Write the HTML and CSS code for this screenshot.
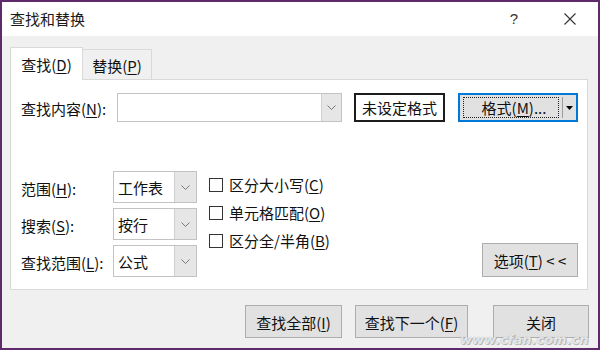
FILE: index.html
```html
<!DOCTYPE html>
<html lang="zh-CN">
<head>
<meta charset="utf-8">
<title>查找和替换</title>
<link rel="stylesheet" href="styles.css">
</head>
<body>
<div class="window">
  <div class="titlebar">
    <span class="title">查找和替换</span>
    <div class="tb-btns">
      <span class="tb-help">?</span>
      <span class="tb-close">
        <svg width="12" height="12" viewBox="0 0 12 12"><path d="M0.5 0.5 L11.5 11.5 M11.5 0.5 L0.5 11.5" stroke="#333" stroke-width="1.1" fill="none"/></svg>
      </span>
    </div>
  </div>
  <div class="body">
    <div class="tabs">
      <div class="tab active"><span>查找(<u>D</u>)</span></div>
      <div class="tab"><span>替换(<u>P</u>)</span></div>
    </div>
    <div class="panel">
      <div class="row1">
        <span class="lbl lbl-wide">查找内容(<u>N</u>):</span>
        <div class="combo combo-find">
          <span class="combo-text"></span>
          <span class="drop drop-narrow"><svg width="9" height="5" viewBox="0 0 9 5"><path d="M0.5 0.5 L4.5 4.5 L8.5 0.5" stroke="#777" fill="none"/></svg></span>
        </div>
        <div class="preview">未设定格式</div>
        <div class="fmt-btn">
          <div class="fmt-main"><span>格式(<u>M</u>)...</span></div>
          <div class="fmt-sep"></div>
          <div class="fmt-arrow"><svg width="7" height="4" viewBox="0 0 7 4"><path d="M0 0 L7 0 L3.5 4 Z" fill="#000"/></svg></div>
        </div>
      </div>
      <div class="lower">
        <div class="opts">
          <span class="lbl">范围(<u>H</u>):</span>
          <div class="combo sel"><span class="combo-text">工作表</span><span class="drop"><svg width="9" height="5" viewBox="0 0 9 5"><path d="M0.5 0.5 L4.5 4.5 L8.5 0.5" stroke="#777" fill="none"/></svg></span></div>
          <span class="lbl">搜索(<u>S</u>):</span>
          <div class="combo sel"><span class="combo-text">按行</span><span class="drop"><svg width="9" height="5" viewBox="0 0 9 5"><path d="M0.5 0.5 L4.5 4.5 L8.5 0.5" stroke="#777" fill="none"/></svg></span></div>
          <span class="lbl">查找范围(<u>L</u>):</span>
          <div class="combo sel"><span class="combo-text">公式</span><span class="drop"><svg width="9" height="5" viewBox="0 0 9 5"><path d="M0.5 0.5 L4.5 4.5 L8.5 0.5" stroke="#777" fill="none"/></svg></span></div>
        </div>
        <div class="checks">
          <label class="chk"><span class="box"></span><span>区分大小写(<u>C</u>)</span></label>
          <label class="chk"><span class="box"></span><span>单元格匹配(<u>O</u>)</span></label>
          <label class="chk"><span class="box"></span><span>区分全/半角(<u>B</u>)</span></label>
        </div>
        <div class="btn btn-opt"><span>选项(<u>T</u>) &lt; &lt;</span></div>
      </div>
    </div>
    <div class="footer">
      <div class="btn btn-all"><span>查找全部(<u>I</u>)</span></div>
      <div class="btn btn-next"><span>查找下一个(<u>F</u>)</span></div>
      <div class="btn btn-close"><span>关闭</span></div>
    </div>
  </div>
  <div class="watermark">www.cfan.com.cn</div>
</div>
</body>
</html>
```
FILE: styles.css
```css
* { box-sizing: border-box; }
html, body { margin: 0; padding: 0; }
body {
  width: 600px;
  height: 350px;
  font-family: "Noto Sans CJK SC", "Noto Sans", sans-serif;
  font-size: 15px;
  color: #111;
  background: #fff;
}
u { text-decoration: underline; text-underline-offset: 2px; text-decoration-thickness: 1px; }

.window {
  width: 600px;
  height: 350px;
  border: 2px solid #5e2a6c;
  display: flex;
  flex-direction: column;
  position: relative;
  overflow: hidden;
}

.titlebar {
  height: 34px;
  flex: none;
  background: #fff;
  display: flex;
  align-items: center;
  padding: 0 5px 0 8px;
  line-height: 20px;
}
.title { font-size: 15px; color: #1a1a1a; }
.tb-btns { margin-left: auto; display: flex; align-items: center; gap: 18px; }
.tb-help { width: 30px; text-align: center; font-family: "Liberation Sans", sans-serif; font-size: 15px; color: #333; }
.tb-close { width: 46px; display: flex; justify-content: center; align-items: center; height: 20px; }

.body {
  flex: 1;
  background: #f0f0f0;
  padding: 11px 10px 0 8px;
  display: flex;
  flex-direction: column;
}

.tabs { display: flex; height: 32px; align-items: flex-start; }
.tab {
  height: 30px;
  margin-top: 2px;
  width: 69px;
  border: 1px solid #d9d9d9;
  border-bottom: 0;
  border-left: 0;
  background: #f0f0f0;
  display: flex;
  align-items: center;
  justify-content: center;
  line-height: 20px;
  padding-top: 3px;
}
.tab.active {
  margin-top: 0;
  height: 33px;
  width: 73px;
  border-left: 1px solid #d9d9d9;
  background: #fff;
  position: relative;
  z-index: 1;
  padding-top: 2px;
}

.panel {
  height: 211px;
  background: #fff;
  border: 1px solid #d9d9d9;
  padding: 13px 9px 0 10px;
  display: flex;
  flex-direction: column;
}

.row1 { display: flex; align-items: center; height: 29px; }
.lbl { line-height: 20px; padding-top: 3px; white-space: nowrap; }
.lbl-wide { width: 96px; flex: none; }

.combo {
  display: flex;
  background: #fff;
  border: 1px solid #c3c3c3;
}
.combo-find { width: 225px; height: 29px; }
.combo-text { flex: 1; padding-left: 4px; line-height: 20px; display: flex; align-items: center; padding-top: 1px; }
.drop {
  width: 21px;
  background: #e6e6e6;
  border-left: 1px solid #d0d0d0;
  display: flex;
  align-items: center;
  justify-content: center;
}
.drop-narrow { width: 20px; }

.preview {
  margin-left: 12px;
  width: 91px;
  height: 29px;
  border: 2px solid #1c1c1c;
  background: #fff;
  display: flex;
  align-items: center;
  justify-content: center;
  line-height: 20px;
}

.fmt-btn {
  margin-left: 13px;
  width: 120px;
  height: 29px;
  border: 2px solid #0078d7;
  background: #e1e1e1;
  display: flex;
  align-items: stretch;
  padding: 2px 3px;
}
.fmt-main {
  flex: 1;
  border: 1px dotted #222;
  display: flex;
  align-items: center;
  justify-content: center;
  line-height: 20px;
  padding-left: 6px;
}
.fmt-sep { width: 1px; background: #9a9a9a; margin: 0 0 0 3px; }
.fmt-arrow { width: 10px; display: flex; align-items: center; justify-content: center; padding-left: 2px; }

.lower {
  margin-top: 49px;
  display: flex;
  align-items: flex-start;
}
.opts {
  display: grid;
  grid-template-columns: 92px 84px;
  grid-auto-rows: 32px;
  row-gap: 5px;
  align-items: center;
}
.sel { height: 32px; }
.sel .drop { width: 22px; }

.checks {
  margin-left: 12px;
  margin-top: 4px;
  display: flex;
  flex-direction: column;
}
.chk {
  height: 28px;
  display: flex;
  align-items: flex-start;
  line-height: 20px;
  gap: 6px;
}
.box {
  width: 14px;
  height: 14px;
  margin-top: 3px;
  border: 1px solid #333;
  background: #fff;
  flex: none;
}

.btn {
  background: #e1e1e1;
  border: 1px solid #adadad;
  display: flex;
  align-items: center;
  justify-content: center;
  line-height: 20px;
  padding-top: 2px;
  white-space: nowrap;
}
.btn-opt {
  margin-left: auto;
  align-self: flex-end;
  width: 96px;
  height: 34px;
}

.footer {
  margin-top: 15px;
  margin-right: -1px;
  display: flex;
  justify-content: flex-end;
}
.footer .btn { height: 33px; }
.btn-all { width: 97px; }
.btn-next { width: 113px; margin-left: 13px; }
.btn-close { width: 96px; margin-left: 25px; }

.watermark {
  position: absolute;
  left: 458px;
  top: 330px;
  font-family: "DejaVu Sans", sans-serif;
  font-style: italic;
  font-weight: bold;
  font-size: 13px;
  line-height: 15px;
  letter-spacing: 0px;
  color: rgba(255, 255, 255, 0.75);
  text-shadow: 0 0 1px #9a9a9a, 1px 1px 0 rgba(150,150,150,0.6);
}
```
